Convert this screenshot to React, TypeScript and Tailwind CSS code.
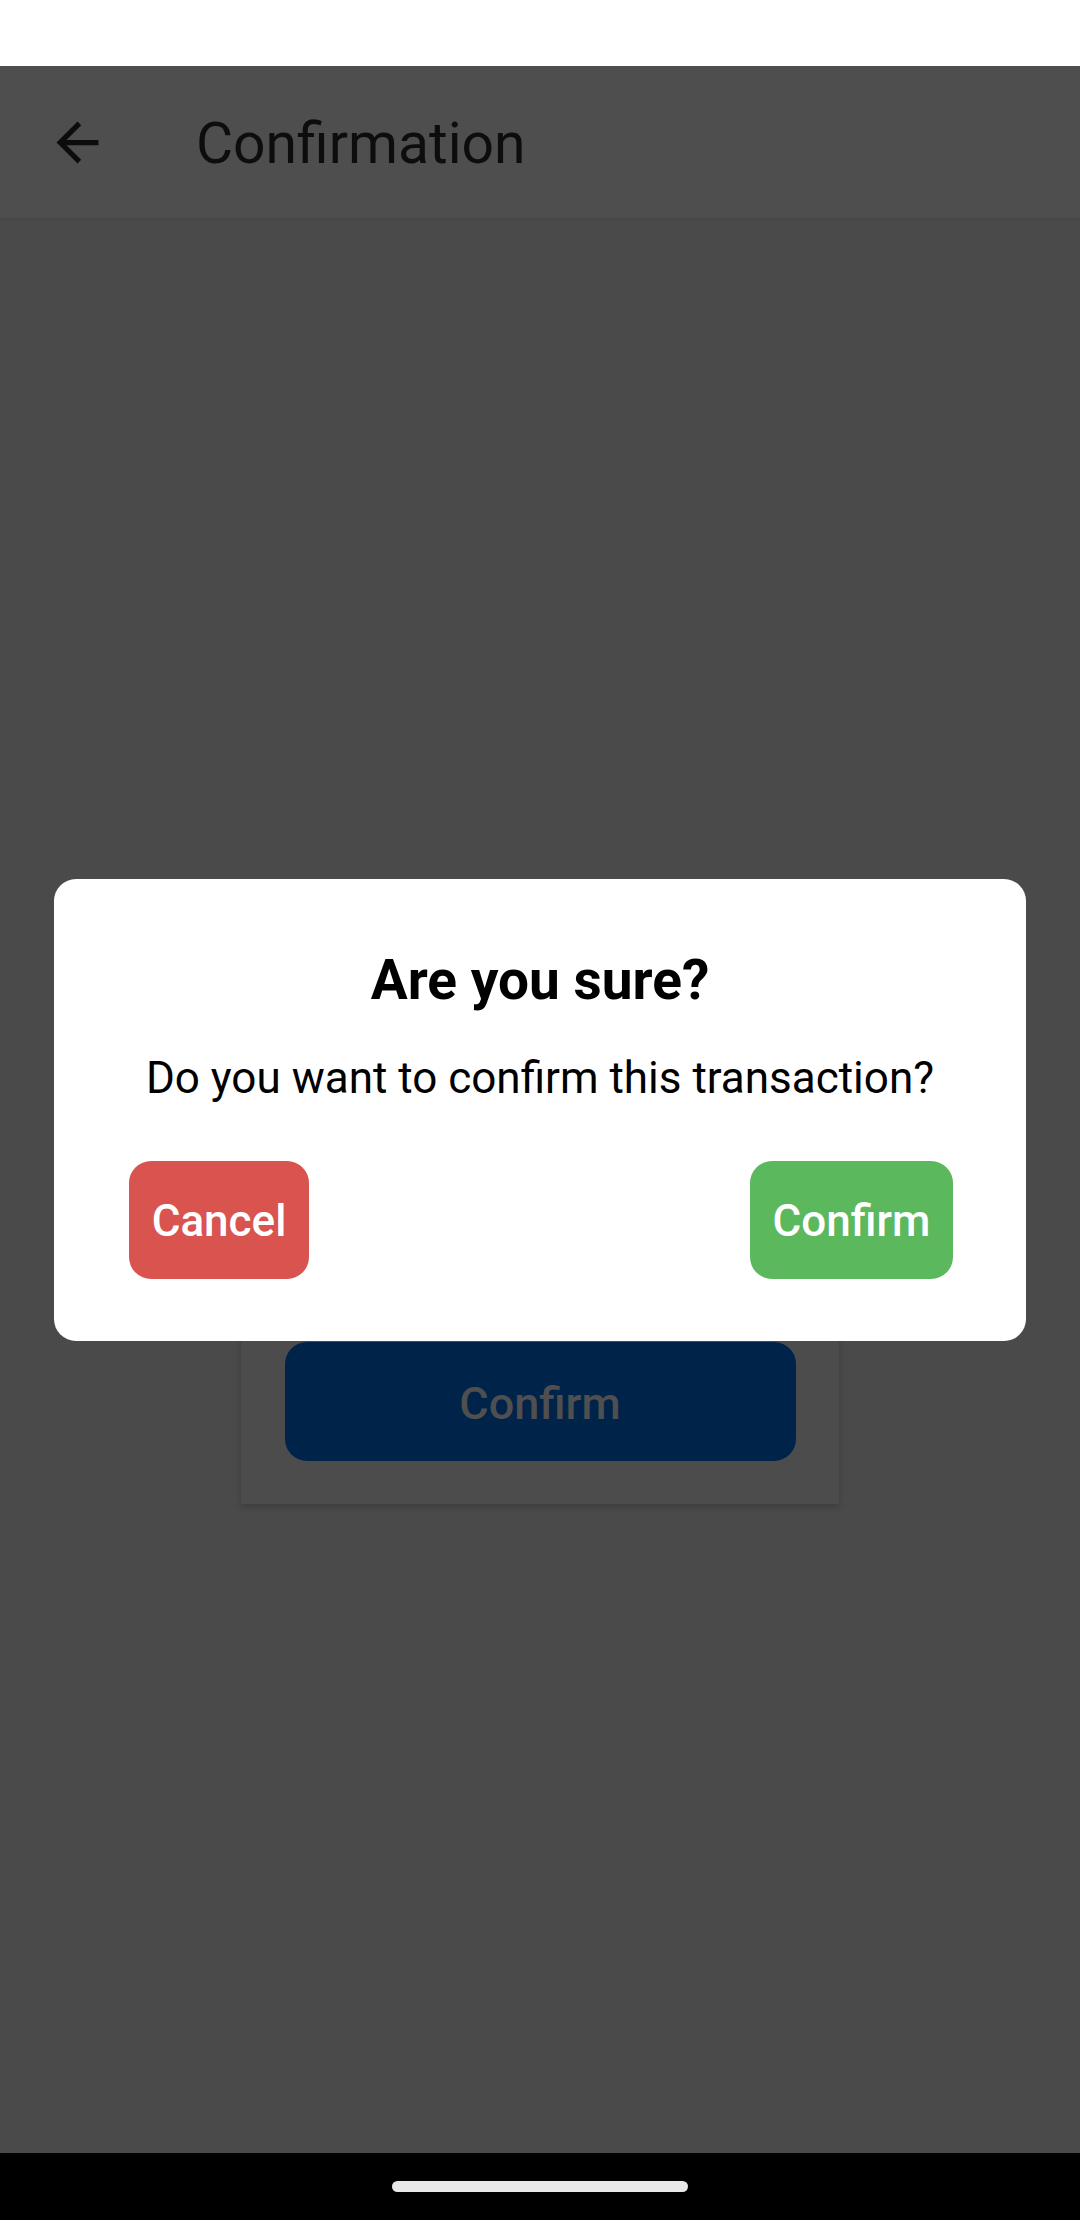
import React from 'react';

const BackArrow = () => (
  <svg width="63" height="63" viewBox="0 0 24 24" fill="#0c0c0c">
    <path d="M20 11H7.83l5.59-5.59L12 4l-8 8 8 8 1.41-1.41L7.83 13H20v-2z" />
  </svg>
);

const App = () => {
  return (
    <div className="w-[1080px] h-[2220px] flex flex-col bg-[#4a4a4a] font-['Roboto',sans-serif] overflow-hidden">
      {/* Status bar */}
      <div className="h-[66px] bg-white shrink-0" />

      {/* App bar */}
      <div className="h-[154px] shrink-0 bg-[#4e4e4e] flex items-center pl-[46px] border-b-2 border-[#484848]">
        <BackArrow />
        <span className="ml-[87px] mt-[3px] text-[57px] leading-none text-[#0d0d0d]">Confirmation</span>
      </div>

      {/* Content */}
      <div className="relative flex-1 flex flex-col items-center">
        {/* Card behind the dialog */}
        <div className="mt-[962px] w-[598px] bg-[#4c4c4c] shadow-[0_3px_6px_rgba(0,0,0,0.18)] flex flex-col items-center pt-[160px] pb-[43px]">
          <div className="w-[511px] h-[119px] rounded-[22px] bg-[#00234a] flex items-center justify-center pt-[3px]">
            <span className="text-[45px] font-medium leading-none text-[#4f4f4f]">Confirm</span>
          </div>
        </div>

        {/* Dialog */}
        <div className="absolute left-[54px] top-[659px] w-[972px] h-[462px] bg-white rounded-[22px] flex flex-col items-center pt-[74px]">
          <h2 className="text-[55px] font-bold leading-none text-black">Are you sure?</h2>
          <p className="mt-[48px] text-[44px] leading-none text-black">Do you want to confirm this transaction?</p>
          <div className="mt-[61px] w-full flex justify-between pl-[75px] pr-[73px]">
            <button className="h-[118px] w-[180px] rounded-[22px] bg-[#d9534f] text-white text-[44px] font-medium leading-none pt-[2px]">
              Cancel
            </button>
            <button className="h-[118px] w-[203px] rounded-[22px] bg-[#5cb85c] text-white text-[44px] font-medium leading-none pt-[2px]">
              Confirm
            </button>
          </div>
        </div>
      </div>

      {/* Navigation bar */}
      <div className="h-[67px] shrink-0 bg-black flex items-center justify-center">
        <div className="w-[296px] h-[11px] rounded-full bg-[#e8e8e8]" />
      </div>
    </div>
  );
};

export default App;
